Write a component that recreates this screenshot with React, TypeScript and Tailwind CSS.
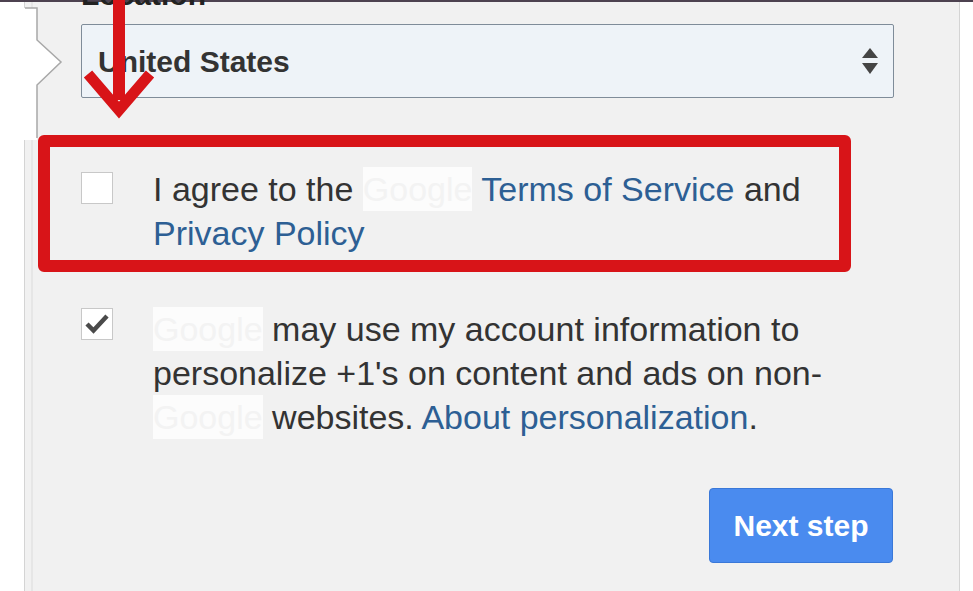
import React from 'react';

const FONT = { fontFamily: '"Liberation Sans", Arial, sans-serif' };

const Blurred: React.FC<{ children: React.ReactNode }> = ({ children }) => (
  <span className="inline-block bg-[#fcfcfc] text-[#f3f3f3] align-top">{children}</span>
);

const Checkbox: React.FC<{ checked?: boolean }> = ({ checked }) => (
  <div className="w-[32px] h-[32px] shrink-0 border border-[#c8c8c8] bg-white flex items-center justify-center">
    {checked && (
      <svg width="26" height="22" viewBox="0 0 26 22">
        <path d="M3 11 L9.5 17.5 L23 3" fill="none" stroke="#4a4a4a" strokeWidth="4.5" />
      </svg>
    )}
  </div>
);

const App: React.FC = () => {
  return (
    <div className="relative w-[973px] h-[591px] overflow-hidden bg-white" style={FONT}>
      <div className="h-[2px] bg-[#4d4250]" />
      <div className="flex h-[589px]">
        <div className="w-[24px] bg-white" />
        <div className="flex-1 border-l border-r border-[#d4d4d4] bg-[#f1f1f1]">
          <div className="h-full ml-[6px] border-l-2 border-[#e6e6e6] pl-[48px] pr-[65px]">
            {/* Location */}
            <div className="h-[22px] flex">
              <div className="-mt-[22px] text-[30px] font-bold leading-[30px] text-[#222]">Location</div>
            </div>
            <div className="h-[74px] border border-[#7f8c99] bg-[#eef3f8] flex items-center justify-between pl-[16px] pr-[14px] rounded-[2px]">
              <span className="text-[30px] font-bold text-[#333]">United States</span>
              <svg width="18" height="30" viewBox="0 0 18 30">
                <path d="M9 2 L17 12 L1 12 Z" fill="#444" />
                <path d="M1 17 L17 17 L9 28 Z" fill="#444" />
              </svg>
            </div>

            {/* Terms row */}
            <div className="relative mt-[69px] flex gap-[40px]">
              <div className="absolute -left-[43px] -top-[32px] right-[43px] -bottom-[17px] border-[12px] border-[#d81418] rounded-[6px]" />
              <div className="mt-[5px]"><Checkbox /></div>
              <p className="text-[34px] leading-[44px] text-[#333]">
                I agree to the <Blurred>Google</Blurred> <span className="text-[#2d5f94]">Terms of Service</span> and
                <br />
                <span className="text-[#2d5f94]">Privacy Policy</span>
              </p>
            </div>

            {/* Personalization row */}
            <div className="mt-[52px] flex gap-[40px]">
              <div className="mt-[1px]"><Checkbox checked /></div>
              <p className="text-[34px] leading-[44px] text-[#333]">
                <Blurred>Google</Blurred> may use my account information to
                <br />
                personalize +1's on content and ads on non-
                <br />
                <Blurred>Google</Blurred> websites. <span className="text-[#2d5f94]">About personalization</span>.
              </p>
            </div>

            <div className="mt-[49px] flex justify-end pr-[1px]">
              <button className="w-[184px] h-[75px] rounded-[4px] bg-[#4a8bef] border border-[#3a78d8] text-white text-[30px] font-bold">
                Next step
              </button>
            </div>
          </div>
        </div>
        <div className="w-[13px] bg-white" />
      </div>

      {/* speech bubble notch on the left */}
      <svg className="absolute left-0 top-0" width="70" height="140" viewBox="0 0 70 140">
        <path d="M0 8 H37 V40 L61 62 L37 85 V140 H0 Z" fill="#fff" />
        <path d="M25 8 H37 V40 L61 62 L37 85 V138" fill="none" stroke="#a8a8a8" strokeWidth="1.5" />
      </svg>

      {/* red annotation arrow */}
      <svg className="absolute left-0 top-0" width="200" height="130" viewBox="0 0 200 130">
        <rect x="113" y="0" width="12" height="100" fill="#d81418" />
        <path d="M88 74 L119 110 L150 74" fill="none" stroke="#d81418" strokeWidth="11" strokeLinejoin="miter" />
      </svg>
    </div>
  );
};

export default App;
